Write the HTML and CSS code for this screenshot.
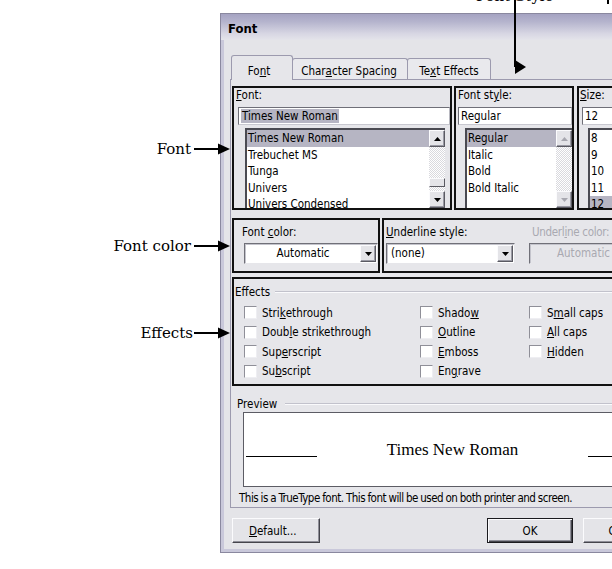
FILE: index.html
```html
<!DOCTYPE html>
<html lang="en">
<head>
<meta charset="utf-8">
<title>Font dialog</title>
<link rel="stylesheet" href="styles.css">
</head>
<body>
<div class="figure">
  <div class="window">
    <div class="titlebar">Font</div>
    <div class="client">
      <div class="tabs">
        <div class="tab tab-font active">Fo<u>n</u>t</div>
        <div class="tab tab-cs">Char<u>a</u>cter Spacing</div>
        <div class="tab tab-te">Te<u>x</u>t Effects</div>
      </div>
      <div class="panel">
        <div class="row row-1">
          <div class="hl group g-font">
            <div class="lbl"><u>F</u>ont:</div>
            <div class="edit"><span class="sel">Times New Roman</span></div>
            <div class="list">
              <div class="items">
                <div class="item selected">Times New Roman</div>
                <div class="item">Trebuchet MS</div>
                <div class="item">Tunga</div>
                <div class="item">Univers</div>
                <div class="item">Univers Condensed</div>
              </div>
              <div class="vscroll">
                <div class="sbtn"><svg width="7" height="4" viewBox="0 0 7 4"><path d="M0 4h7L3.5 0z"/></svg></div>
                <div class="track"><div class="thumb"></div></div>
                <div class="sbtn"><svg width="7" height="4" viewBox="0 0 7 4"><path d="M0 0h7L3.5 4z"/></svg></div>
              </div>
            </div>
          </div>
          <div class="hl group g-style">
            <div class="lbl">Font st<u>y</u>le:</div>
            <div class="edit">Regular</div>
            <div class="list">
              <div class="items">
                <div class="item selected">Regular</div>
                <div class="item">Italic</div>
                <div class="item">Bold</div>
                <div class="item">Bold Italic</div>
              </div>
              <div class="vscroll disabled">
                <div class="sbtn"><svg width="7" height="4" viewBox="0 0 7 4"><path d="M0 4h7L3.5 0z"/></svg></div>
                <div class="track"></div>
                <div class="sbtn"><svg width="7" height="4" viewBox="0 0 7 4"><path d="M0 0h7L3.5 4z"/></svg></div>
              </div>
            </div>
          </div>
          <div class="hl group g-size">
            <div class="lbl"><u>S</u>ize:</div>
            <div class="edit">12</div>
            <div class="list">
              <div class="items">
                <div class="item">8</div>
                <div class="item">9</div>
                <div class="item">10</div>
                <div class="item">11</div>
                <div class="item selected">12</div>
              </div>
            </div>
          </div>
        </div>

        <div class="row row-2">
          <div class="hl group g-color">
            <div class="lbl">Font <u>c</u>olor:</div>
            <div class="combo combo-color">
              <div class="combo-text center">Automatic</div>
              <div class="dbtn"><svg width="7" height="4" viewBox="0 0 7 4"><path d="M0 0h7L3.5 4z"/></svg></div>
            </div>
          </div>
          <div class="hl group g-underline">
            <div class="ucol ucol-style">
              <div class="lbl"><u>U</u>nderline style:</div>
              <div class="combo combo-ustyle">
                <div class="combo-text">(none)</div>
                <div class="dbtn"><svg width="7" height="4" viewBox="0 0 7 4"><path d="M0 0h7L3.5 4z"/></svg></div>
              </div>
            </div>
            <div class="ucol ucol-color">
              <div class="lbl disabled">Underl<u>i</u>ne color:</div>
              <div class="combo combo-ucolor disabled">
                <div class="combo-text center">Automatic</div>
              </div>
            </div>
          </div>
        </div>

        <div class="hl group g-effects">
          <div class="sep"><span>Effects</span><i></i></div>
          <div class="checks">
            <div class="chk"><b></b>Stri<u>k</u>ethrough</div>
            <div class="chk"><b></b>Shado<u>w</u></div>
            <div class="chk"><b></b>S<u>m</u>all caps</div>
            <div class="chk"><b></b>Doub<u>l</u>e strikethrough</div>
            <div class="chk"><b></b><u>O</u>utline</div>
            <div class="chk"><b></b><u>A</u>ll caps</div>
            <div class="chk"><b></b>Sup<u>e</u>rscript</div>
            <div class="chk"><b></b><u>E</u>mboss</div>
            <div class="chk"><b></b><u>H</u>idden</div>
            <div class="chk"><b></b>Su<u>b</u>script</div>
            <div class="chk"><b></b>En<u>g</u>rave</div>
          </div>
        </div>

        <div class="sep sep-preview"><span>Preview</span><i></i></div>
        <div class="preview">
          <div class="pline"></div>
          <div class="ptext">Times New Roman</div>
          <div class="pline"></div>
        </div>
        <div class="note">This is a TrueType font. This font will be used on both printer and screen.</div>
      </div>

      <div class="buttons">
        <div class="btn btn-default"><u>D</u>efault...</div>
        <div class="spacer"></div>
        <div class="btn btn-ok">OK</div>
        <div class="btn btn-cancel">Cancel</div>
      </div>
    </div>
  </div>

  <div class="callout co-font">Font<svg width="36" height="12" viewBox="0 0 36 12"><rect x="0" y="5" width="25" height="2"/><path d="M24 0.5L36 6L24 11.5z"/></svg></div>
  <div class="callout co-color">Font color<svg width="36" height="12" viewBox="0 0 36 12"><rect x="0" y="5" width="25" height="2"/><path d="M24 0.5L36 6L24 11.5z"/></svg></div>
  <div class="callout co-effects">Effects<svg width="36" height="12" viewBox="0 0 36 12"><rect x="0" y="5" width="25" height="2"/><path d="M24 0.5L36 6L24 11.5z"/></svg></div>
  <div class="co-top-text">Font Style</div>
  <svg class="co-top-arrow" width="14" height="75" viewBox="0 0 14 75"><rect x="0" y="0" width="2" height="67"/><path d="M1 60L12 67L1 74z"/></svg>
  <div class="co-top-mark"></div>
</div>
</body>
</html>
```

FILE: styles.css
```css
html, body {
  margin: 0;
  padding: 0;
  background: #fff;
  overflow: hidden;
}

.figure {
  position: relative;
  width: 612px;
  height: 569px;
  padding-top: 13px;
  box-sizing: border-box;
  overflow: hidden;
}

u { text-decoration: underline; text-underline-offset: 1px; }

/* ---------- window ---------- */
.window {
  margin-left: 220px;
  width: 461px;
  height: 540px;
  box-sizing: border-box;
  border: 1px solid #8a889f;
  background: #c9c8da;
  padding: 0 3px 3px 3px;
  display: flex;
  flex-direction: column;
  font-family: "DejaVu Sans Condensed", "DejaVu Sans", sans-serif;
  font-stretch: condensed;
  font-size: 11.5px;
  color: #000;
}

.titlebar {
  flex: none;
  height: 26px;
  margin: 0 -3px;
  padding: 8px 0 0 7px;
  box-sizing: border-box;
  line-height: 14px;
  font-size: 13px;
  font-weight: bold;
  background: linear-gradient(#a5a3c2 0%, #b5b4cd 30%, #d7d6e3 75%, #e4e4ea 100%);
}

.client {
  flex: 1;
  background: #e4e4e8;
  padding: 15px 0 6px 0;
  display: flex;
  flex-direction: column;
}

/* ---------- tabs ---------- */
.tabs {
  display: flex;
  align-items: flex-end;
  margin-left: 7px;
  height: 24px;
}
.tab {
  height: 21px;
  box-sizing: border-box;
  border: 1px solid #9c9aae;
  border-bottom: none;
  border-radius: 3px 3px 0 0;
  background: #e9e9ed;
  display: flex;
  align-items: flex-end;
  justify-content: center;
  line-height: 14px;
  padding-bottom: 1px;
  white-space: nowrap;
}
.tab + .tab { margin-left: -1px; }
.tab-font { width: 62px; padding-right: 6px; }
.tab-cs { width: 116px; padding-right: 2px; }
.tab-te { width: 84px; }
.tab.active {
  height: 25px;
  background: #e6e6ea;
  position: relative;
  z-index: 1;
  margin-bottom: -1px;
  padding-bottom: 2px;
}

.panel {
  margin-left: 6px;
  width: 441px;
  box-sizing: border-box;
  border: 1px solid #9c9aae;
  background: #e6e6ea;
  padding: 6px 0 2px 1px;
}

/* ---------- highlight boxes ---------- */
.hl {
  border: 2px solid #111;
  box-sizing: border-box;
}

.lbl {
  height: 14px;
  line-height: 14px;
  white-space: nowrap;
}
.lbl.disabled, .disabled { color: #a9a9b1; }

.row { display: flex; }
.row-1 { height: 124px; }
.g-font { width: 220px; }
.g-style { width: 120px; margin-left: 2px; }
.g-size { width: 90px; margin-left: 3px; }

.g-font .lbl { padding-left: 2px; }
.g-style .lbl { padding-left: 2px; }
.g-size .lbl { padding-left: 1px; }

.edit {
  height: 18px;
  margin-top: 5px;
  box-sizing: border-box;
  border: 1px solid #6f6f78;
  border-right-color: #b8b8c0;
  border-bottom-color: #c8c8d0;
  background: #fff;
  line-height: 16px;
  padding-left: 2px;
  white-space: nowrap;
  overflow: hidden;
}
.g-font .edit { margin-left: 4px; width: 212px; }
.g-style .edit { margin-left: 2px; width: 114px; }
.g-size .edit { margin-left: 3px; }
.sel { background: #b6b5c3; padding: 0 1px; }

.list {
  margin-top: 3px;
  height: 80px;
  box-sizing: border-box;
  border-top: 2px solid #4a4a52;
  border-left: 2px solid #4a4a52;
  background: #fff;
  display: flex;
  overflow: hidden;
}
.g-font .list { margin-left: 11px; width: 200px; }
.g-style .list { margin-left: 9px; width: 107px; }
.g-size .list { margin-left: 9px; }

.items { flex: 1; overflow: hidden; }
.item {
  height: 16.6px;
  line-height: 16.6px;
  padding-left: 1px;
  white-space: nowrap;
}
.item.selected { background: #b6b5c3; }

.vscroll {
  width: 16px;
  flex: none;
  display: flex;
  flex-direction: column;
}
.sbtn, .dbtn {
  height: 17px;
  box-sizing: border-box;
  background: #e4e4e8;
  border: 1px solid;
  border-color: #fbfbfd #5a5a62 #5a5a62 #fbfbfd;
  box-shadow: inset -1px -1px #9a9aa4;
  display: flex;
  align-items: center;
  justify-content: center;
  flex: none;
}
.sbtn svg, .dbtn svg { fill: #000; }
.vscroll.disabled svg { fill: #a8a8b0; }
.track {
  flex: 1;
  background-color: #f2f2f4;
  background-image: repeating-conic-gradient(#ffffff 0 25%, #d9d9de 0 50%);
  background-size: 2px 2px;
}
.thumb {
  margin-top: 31px;
  height: 9px;
  box-sizing: border-box;
  background: #e4e4e8;
  border: 1px solid;
  border-color: #fbfbfd #5a5a62 #5a5a62 #fbfbfd;
}

/* ---------- row 2 ---------- */
.row-2 { height: 55px; margin-top: 8px; }
.g-color { width: 148px; }
.g-underline { width: 288px; margin-left: 2px; display: flex; }
.g-color .lbl { margin-top: 5px; padding-left: 8px; }

.combo {
  margin-top: 4px;
  height: 21px;
  box-sizing: border-box;
  border: 1px solid;
  border-color: #707078 #e6e6ea #e6e6ea #707078;
  box-shadow: inset 1px 1px #c4c4cc;
  background: #fff;
  display: flex;
  align-items: center;
  padding: 1px;
}
.combo-text {
  flex: 1;
  padding-left: 3px;
  line-height: 17px;
  white-space: nowrap;
}
.combo-text.center { text-align: center; padding-left: 0; }
.dbtn { width: 16px; height: 17px; }
.combo-color { margin-left: 10px; width: 134px; }

.ucol .lbl { margin-top: 5px; }
.ucol-style { width: 131px; }
.ucol-style .lbl { padding-left: 2px; }
.combo-ustyle { margin-left: 2px; width: 129px; }
.ucol-color { margin-left: 14px; flex: 1; }
.ucol-color .lbl { padding-left: 3px; letter-spacing: -0.3px; }
.combo-ucolor { background: #e6e6ea; box-shadow: inset 1px 1px #c4c4cc; }
.combo-ucolor .combo-text { padding-right: 30px; }

/* ---------- effects ---------- */
.g-effects { width: 436px; height: 109px; margin-top: 4px; }
.sep {
  display: flex;
  align-items: center;
  height: 14px;
  line-height: 14px;
}
.sep i {
  flex: 1;
  height: 0;
  border-top: 1px solid #c2c2cc;
  border-bottom: 1px solid #fafafc;
  margin-left: 5px;
}
.g-effects .sep { margin-top: 6px; padding-left: 1px; }

.checks {
  margin: 4px 0 0 10px;
  display: grid;
  grid-template-columns: 176px 109px 1fr;
  grid-auto-rows: 19.5px;
}
.chk {
  display: flex;
  align-items: center;
  white-space: nowrap;
}
.chk b {
  width: 13px;
  height: 13px;
  box-sizing: border-box;
  border: 1px solid;
  border-color: #8f8f98 #eeeef2 #eeeef2 #8f8f98;
  background: #fff;
  margin-right: 5px;
  flex: none;
}

/* ---------- preview ---------- */
.sep-preview { margin-top: 11px; padding-left: 5px; margin-right: 6px; }
.sep-preview i { margin-left: 8px; }

.preview {
  margin: 1px 0 0 11px;
  width: 420px;
  height: 75px;
  box-sizing: border-box;
  border: 1px solid #5c5c64;
  background: #fff;
  display: flex;
  align-items: center;
  justify-content: space-between;
  padding: 0 3px 0 2px;
}
.pline {
  width: 71px;
  height: 1px;
  background: #000;
  margin-top: 14px;
}
.ptext {
  font-family: "Liberation Serif", "Times New Roman", serif;
  font-size: 17px;
  line-height: 20px;
}

.note {
  margin-top: 4px;
  padding-left: 7px;
  height: 14px;
  line-height: 14px;
  white-space: nowrap;
  letter-spacing: -0.5px;
  word-spacing: -0.4px;
}

/* ---------- buttons ---------- */
.buttons {
  display: flex;
  margin: 10px 8px 0 8px;
  height: 25px;
}
.spacer { flex: 1; }
.btn {
  width: 86px;
  height: 25px;
  box-sizing: border-box;
  background: #e4e4e8;
  border: 1px solid;
  border-color: #fbfbfd #45454c #45454c #fbfbfd;
  box-shadow: inset -1px -1px #8f8f98;
  display: flex;
  align-items: center;
  justify-content: center;
  line-height: 14px;
}
.btn-default { width: 88px; justify-content: flex-start; padding-left: 16px; }
.btn-ok {
  border: 1px solid #1a1a1e;
  box-shadow: inset 1px 1px #fbfbfd, inset -1px -1px #45454c, inset -2px -2px #8f8f98;
}
.btn-cancel { margin-left: 10px; }

/* ---------- callouts (annotations over the figure) ---------- */
.callout {
  position: absolute;
  display: flex;
  align-items: center;
  font-family: "DejaVu Serif", serif;
  font-size: 15px;
  line-height: 18px;
  color: #000;
  white-space: nowrap;
}
.callout svg { fill: #000; margin-left: 3px; }
.co-font { right: 382px; top: 140px; }
.co-color { right: 382px; top: 237px; }
.co-effects { right: 382px; top: 324px; }
.co-effects svg { margin-left: 1px; }

.co-top-text {
  position: absolute;
  left: 476px;
  top: -13px;
  font-family: "DejaVu Serif", serif;
  font-size: 15px;
  line-height: 18px;
  white-space: nowrap;
}
.co-top-arrow { position: absolute; left: 514px; top: 0; fill: #000; }
.co-top-mark {
  position: absolute;
  left: 607px;
  top: 0;
  width: 2px;
  height: 4px;
  background: #000;
}
```
